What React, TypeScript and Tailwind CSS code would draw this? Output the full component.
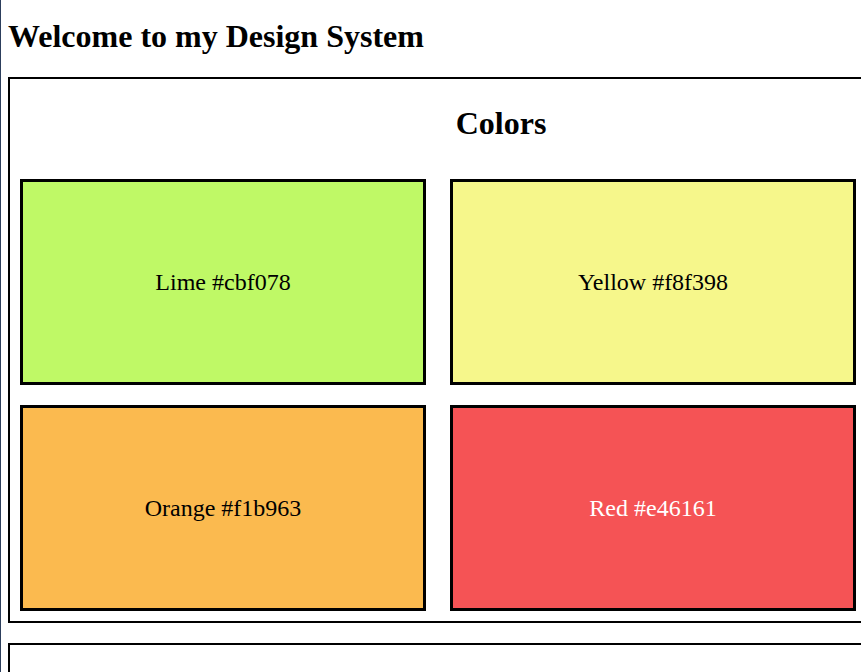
type Swatch = { label: string; box: string };

const swatches: Swatch[] = [
  { label: "Lime #cbf078", box: "bg-[#bff966] text-black" },
  { label: "Yellow #f8f398", box: "bg-[#f6f78b] text-black" },
  { label: "Orange #f1b963", box: "bg-[#fbba4f] text-black" },
  { label: "Red #e46161", box: "bg-[#f55355] text-white" },
];

function ColorCard({ label, box }: Swatch) {
  return (
    <li
      className={`flex h-[206px] w-[406px] items-center justify-center border-3 border-black text-2xl ${box}`}
    >
      {label}
    </li>
  );
}

export default function App() {
  return (
    <main className="flex min-h-screen flex-col overflow-x-hidden border-l border-[#2c3e5c] bg-white pl-[7px] font-['Liberation_Serif','Times_New_Roman',serif] text-black">
      <h1 className="pt-[18px] pb-[23px] text-[32px] leading-9 font-bold">
        Welcome to my Design System
      </h1>
      <section
        aria-labelledby="colors-title"
        className="mb-5 min-w-[986px] border-2 border-black px-[10px] pb-[10px]"
      >
        <h2
          id="colors-title"
          className="pt-[26px] pb-[38px] text-center text-[32px] leading-9 font-bold"
        >
          Colors
        </h2>
        <ul className="flex flex-wrap gap-x-6 gap-y-5">
          {swatches.map((swatch) => (
            <ColorCard key={swatch.label} {...swatch} />
          ))}
        </ul>
      </section>
      <section className="min-w-[986px] flex-1 border-2 border-b-0 border-black" />
    </main>
  );
}
